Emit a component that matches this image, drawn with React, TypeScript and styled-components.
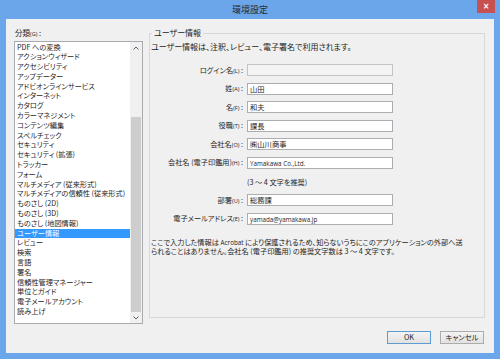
import React from "react";
import styled, { createGlobalStyle } from "styled-components";

const GlobalStyle = createGlobalStyle`
  html, body {
    margin: 0;
    padding: 0;
    background: #6ba5ea;
  }
  body {
    font-family: "Noto Sans CJK JP", "Noto Sans", sans-serif;
    font-feature-settings: "palt";
  }
`;

const Window = styled.div`
  width: 500px;
  height: 359px;
  background: #6ba5ea;
  display: flex;
  flex-direction: column;
  box-sizing: border-box;
`;

const TitleBar = styled.div`
  height: 19px;
  display: grid;
  grid-template-columns: 1fr auto 1fr;
  align-items: start;
`;

const Title = styled.div`
  grid-column: 2;
  font-size: 9px;
  line-height: 19px;
  color: #2a2a2a;
`;

const CloseButton = styled.div`
  grid-column: 3;
  justify-self: end;
  margin-right: 5px;
  width: 18px;
  height: 13px;
  background: #c75050;
  color: #fff;
  font-family: "DejaVu Sans", sans-serif;
  font-size: 8px;
  font-weight: bold;
  line-height: 13px;
  text-align: center;
`;

const Client = styled.div`
  flex: 1;
  margin: 0 6px 7px 6px;
  background: #f0f0f0;
  padding: 8px 9px 9px 8px;
  display: grid;
  grid-template-columns: 129px 336px;
  column-gap: 6px;
  font-size: 7.5px;
  color: #1e1e1e;
`;

const LeftColumn = styled.div`
  display: flex;
  flex-direction: column;
`;

const FieldLabel = styled.div`
  height: 14px;
  line-height: 11px;
  padding-left: 1px;
`;

const Key = styled.span`
  font-family: "Open Sans", "Noto Sans", sans-serif;
  font-size: 5.6px;
`;

const Latin = styled.span`
  font-family: "Open Sans", "Noto Sans", sans-serif;
  font-size: 6.3px;
`;

const ListBox = styled.div`
  height: 283px;
  box-sizing: border-box;
  border: 1px solid #a9abb0;
  background: #fff;
  display: flex;
`;

const Items = styled.div`
  flex: 1;
  padding-top: 0.5px;
  overflow: hidden;
  font-size: 7.2px;
`;

const Item = styled.div<{ $selected?: boolean }>`
  height: 9.8px;
  line-height: 9.8px;
  padding-left: 2px;
  white-space: nowrap;
  background: ${(p) => (p.$selected ? "#3399ff" : "transparent")};
  color: ${(p) => (p.$selected ? "#fff" : "#1e1e1e")};
`;

const ScrollBar = styled.div`
  width: 12px;
  background: #f0f0f0;
  display: flex;
  flex-direction: column;
`;

const Arrow = styled.div`
  height: 11px;
  display: flex;
  align-items: center;
  justify-content: center;
`;

const Track = styled.div`
  flex: 1;
  display: flex;
  flex-direction: column;
  padding: 0 1px;
`;

const Thumb = styled.div`
  background: #cdcdcd;
`;

const RightColumn = styled.div`
  display: flex;
  flex-direction: column;
`;

const Group = styled.fieldset`
  margin: 0;
  padding: 0;
  height: 291px;
  box-sizing: border-box;
  border: 1px solid #d9d9d9;
  min-width: 0;
`;

const Legend = styled.legend`
  margin-left: 2px;
  padding: 0 2px;
  font-size: 8px;
  line-height: 12px;
`;

const GroupBody = styled.div`
  padding-left: 1px;
`;

const Description = styled.div`
  margin-top: 2px;
  font-size: 8px;
  line-height: 11px;
  white-space: nowrap;
`;

const Form = styled.div`
  margin-top: 12px;
  display: grid;
  grid-template-columns: 95px 146px;
  column-gap: 1px;
  grid-auto-rows: 12px;
  row-gap: 6.6px;
  align-items: center;
`;

const RowLabel = styled.div`
  text-align: right;
  white-space: nowrap;
  line-height: 12px;
  padding-right: 3px;
  font-size: 7.2px;
`;

const Input = styled.div<{ $disabled?: boolean }>`
  height: 12px;
  box-sizing: border-box;
  border: 1px solid ${(p) => (p.$disabled ? "#c4c4c4" : "#abadb3")};
  background: ${(p) => (p.$disabled ? "#f4f4f4" : "#fff")};
  font-size: 7.3px;
  line-height: 10px;
  padding-left: 2px;
  white-space: nowrap;
  overflow: hidden;
`;

const Hint = styled.div`
  grid-column: 2;
  white-space: nowrap;
  line-height: 12px;
  font-size: 7.2px;
`;

const Note = styled.div`
  margin-top: 13.5px;
  font-size: 7.2px;
  line-height: 9px;
  white-space: nowrap;
`;

const ButtonRow = styled.div`
  margin-top: 13px;
  display: flex;
  justify-content: flex-end;
  gap: 9px;
  padding-right: 1px;
`;

const Button = styled.div<{ $default?: boolean }>`
  width: 44px;
  height: 12.5px;
  box-sizing: border-box;
  border: 1px solid ${(p) => (p.$default ? "#5e9bd1" : "#acacac")};
  background: linear-gradient(#f3f3f3, #e2e2e2);
  display: flex;
  align-items: center;
  justify-content: center;
  font-size: 7.3px;
  color: #1e1e1e;
`;

const categories = [
  "PDF への変換",
  "アクションウィザード",
  "アクセシビリティ",
  "アップデーター",
  "アドビオンラインサービス",
  "インターネット",
  "カタログ",
  "カラーマネジメント",
  "コンテンツ編集",
  "スペルチェック",
  "セキュリティ",
  "セキュリティ (拡張)",
  "トラッカー",
  "フォーム",
  "マルチメディア (従来形式)",
  "マルチメディアの信頼性 (従来形式)",
  "ものさし (2D)",
  "ものさし (3D)",
  "ものさし (地図情報)",
  "ユーザー情報",
  "レビュー",
  "検索",
  "言語",
  "署名",
  "信頼性管理マネージャー",
  "単位とガイド",
  "電子メールアカウント",
  "読み上げ",
];

const Chevron: React.FC<{ up?: boolean }> = ({ up }) => (
  <svg width="6" height="4" viewBox="0 0 6 4">
    <path
      d={up ? "M0.5 3.5 L3 1 L5.5 3.5" : "M0.5 0.5 L3 3 L5.5 0.5"}
      fill="none"
      stroke="#606060"
      strokeWidth="1"
    />
  </svg>
);

type Field = { label: string; key: string; value?: string; latin?: boolean; disabled?: boolean };

const fieldsTop: Field[] = [
  { label: "ログイン名", key: "L", disabled: true },
  { label: "姓", key: "A", value: "山田" },
  { label: "名", key: "F", value: "和夫" },
  { label: "役職", key: "T", value: "課長" },
  { label: "会社名", key: "O", value: "㈱山川商事" },
  { label: "会社名 (電子印鑑用)", key: "H", value: "Yamakawa Co.,Ltd.", latin: true },
];

const fieldsBottom: Field[] = [
  { label: "部署", key: "U", value: "総務課" },
  { label: "電子メールアドレス", key: "E", value: "yamada@yamakawa.jp", latin: true },
];

const renderField = (f: Field) => (
  <React.Fragment key={f.key}>
    <RowLabel>
      {f.label}
      <Key>({f.key})</Key> :
    </RowLabel>
    <Input $disabled={f.disabled}>
      {f.latin ? <Latin>{f.value}</Latin> : f.value}
    </Input>
  </React.Fragment>
);

const App: React.FC = () => {
  return (
    <Window>
      <GlobalStyle />
      <TitleBar>
        <Title>環境設定</Title>
        <CloseButton>×</CloseButton>
      </TitleBar>
      <Client>
        <LeftColumn>
          <FieldLabel>
            分類<Key>(G)</Key> :
          </FieldLabel>
          <ListBox>
            <Items>
              {categories.map((c) => (
                <Item key={c} $selected={c === "ユーザー情報"}>
                  {c}
                </Item>
              ))}
            </Items>
            <ScrollBar>
              <Arrow>
                <Chevron up />
              </Arrow>
              <Track>
                <div style={{ height: 64 }} />
                <Thumb style={{ height: 195 }} />
              </Track>
              <Arrow>
                <Chevron />
              </Arrow>
            </ScrollBar>
          </ListBox>
        </LeftColumn>
        <RightColumn>
          <Group>
            <Legend>ユーザー情報</Legend>
            <GroupBody>
              <Description>ユーザー情報は、注釈、レビュー、電子署名で利用されます。</Description>
              <Form>
                {fieldsTop.map(renderField)}
                <Hint>(3 〜 4 文字を推奨)</Hint>
                {fieldsBottom.map(renderField)}
              </Form>
              <Note>
                ここで入力した情報は <Latin>Acrobat</Latin> により保護されるため、知らないうちにこのアプリケーションの外部へ送
                <br />
                られることはありません。会社名 (電子印鑑用) の推奨文字数は 3 〜 4 文字です。
              </Note>
            </GroupBody>
          </Group>
          <ButtonRow>
            <Button $default>OK</Button>
            <Button>キャンセル</Button>
          </ButtonRow>
        </RightColumn>
      </Client>
    </Window>
  );
};

export default App;
